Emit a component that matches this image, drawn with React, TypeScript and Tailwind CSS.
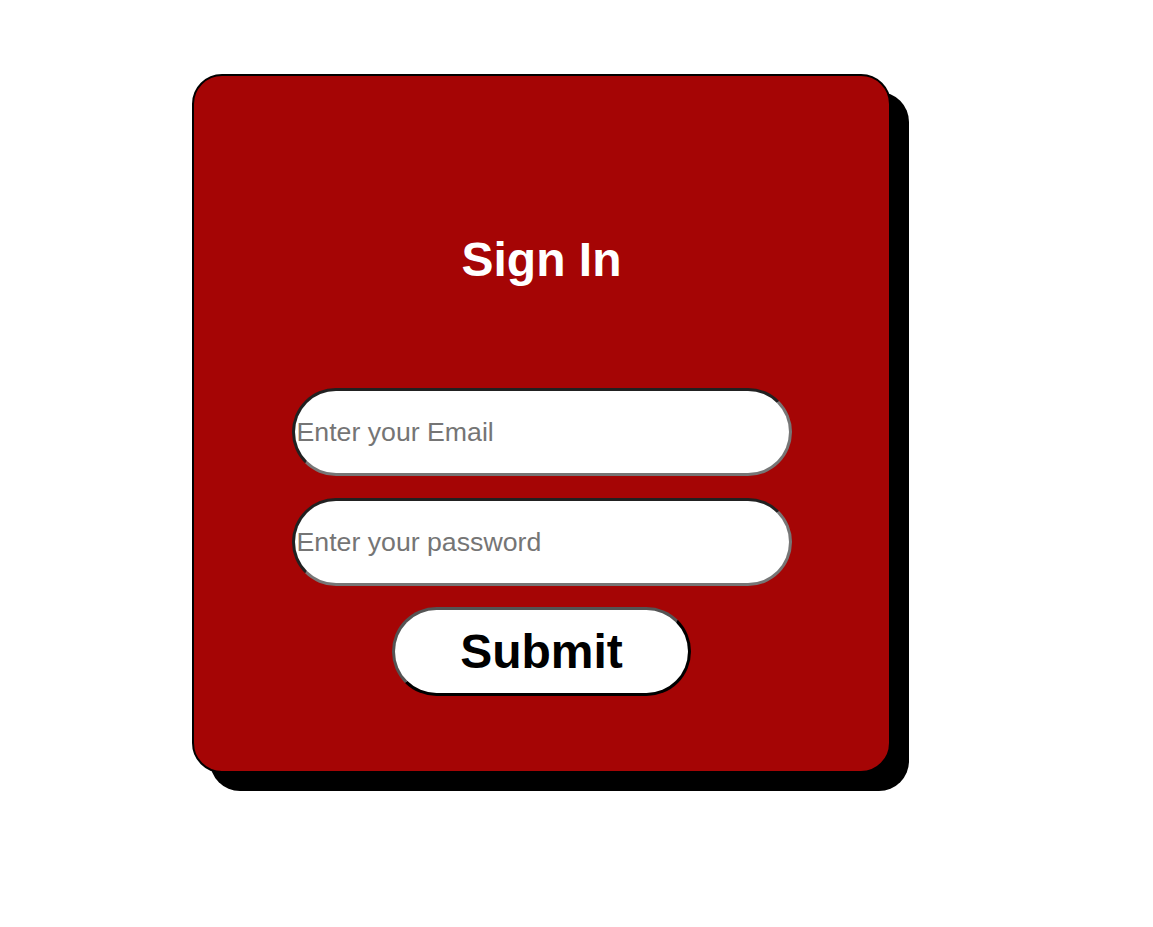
import React from "react";

function SignIn() {
  return (
    <div className="w-[699px] h-[699px] rounded-[30px] border-2 border-black bg-[#a50505] shadow-[18px_18px_0_0_#000] flex flex-col items-center">
      <h1 className="mt-[160px] text-[48px] font-bold text-white leading-none">Sign In</h1>
      <form className="mt-[104px] flex flex-col items-center gap-[22px]">
        <input
          type="email"
          placeholder="Enter your Email"
          className="w-[500px] h-[88px] rounded-full bg-white border-[3px] border-[#767676] [border-style:inset] px-[2px] text-[26.7px] placeholder:text-[#757575] outline-none"
        />
        <input
          type="password"
          placeholder="Enter your password"
          className="w-[500px] h-[88px] rounded-full bg-white border-[3px] border-[#767676] [border-style:inset] px-[2px] text-[26.7px] placeholder:text-[#757575] outline-none"
        />
        <button
          type="button"
          className="-mt-[1px] w-[299px] h-[89px] rounded-full bg-white border-[3px] border-black [border-style:outset] text-[48px] font-bold text-black"
        >
          Submit
        </button>
      </form>
    </div>
  );
}

export default function App() {
  return (
    <div className="min-h-[927px] bg-white pt-[74px] pl-[192px] font-['Liberation_Sans',Arial,sans-serif]">
      <SignIn />
    </div>
  );
}
